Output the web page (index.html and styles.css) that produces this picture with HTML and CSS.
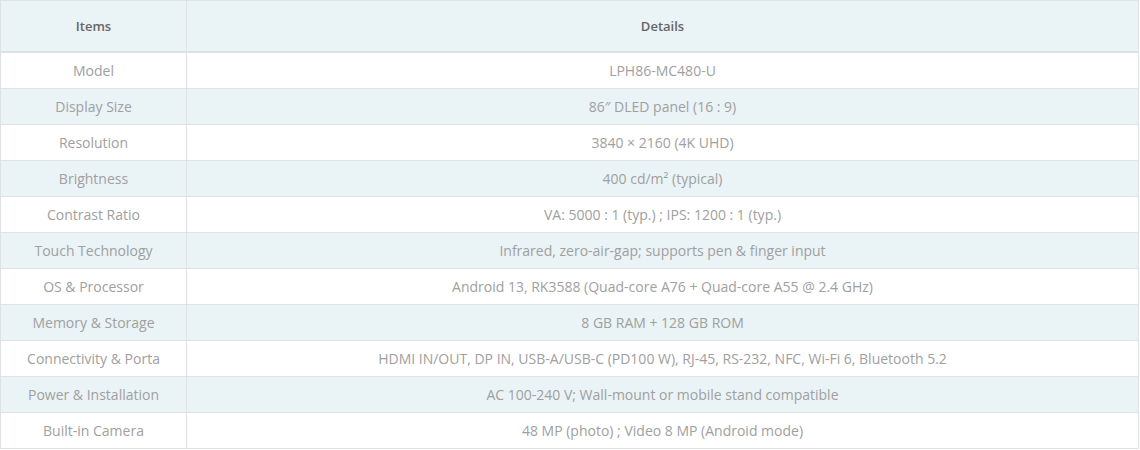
FILE: index.html
```html
<!DOCTYPE html>
<html>
<head>
<meta charset="utf-8">
<link rel="stylesheet" href="styles.css">
</head>
<body>
<table class="spec">
  <thead>
    <tr><th class="col-item">Items</th><th>Details</th></tr>
  </thead>
  <tbody>
    <tr><td>Model</td><td>LPH86-MC480-U</td></tr>
    <tr><td>Display Size</td><td>86″ DLED panel (16 : 9)</td></tr>
    <tr><td>Resolution</td><td>3840 × 2160 (4K UHD)</td></tr>
    <tr><td>Brightness</td><td>400 cd/m² (typical)</td></tr>
    <tr><td>Contrast Ratio</td><td>VA: 5000 : 1 (typ.) ; IPS: 1200 : 1 (typ.)</td></tr>
    <tr><td>Touch Technology</td><td>Infrared, zero-air-gap; supports pen &amp; finger input</td></tr>
    <tr><td>OS &amp; Processor</td><td>Android 13, RK3588 (Quad-core A76 + Quad-core A55 @ 2.4 GHz)</td></tr>
    <tr><td>Memory &amp; Storage</td><td>8 GB RAM + 128 GB ROM</td></tr>
    <tr><td>Connectivity &amp; Porta</td><td>HDMI IN/OUT, DP IN, USB-A/USB-C (PD100 W), RJ-45, RS-232, NFC, Wi-Fi 6, Bluetooth 5.2</td></tr>
    <tr><td>Power &amp; Installation</td><td>AC 100-240 V; Wall-mount or mobile stand compatible</td></tr>
    <tr><td>Built-in Camera</td><td>48 MP (photo) ; Video 8 MP (Android mode)</td></tr>
  </tbody>
</table>
</body>
</html>
```
FILE: styles.css
```css
html, body {
  margin: 0;
  padding: 0;
  background: #ffffff;
}
.spec {
  width: 1139px;
  border-collapse: collapse;
  font-family: "Open Sans", "Liberation Sans", sans-serif;
  font-size: 14px;
  color: #a0a0a0;
  text-align: center;
}
.spec th, .spec td {
  border: 1px solid #dde3e5;
  padding: 0 10px;
  text-align: center;
}
.spec th {
  height: 50px;
  background: #eaf3f6;
  color: #666666;
  font-size: 13px;
  font-weight: 600;
  border-bottom: 2px solid #dde3e5;
}
.spec .col-item {
  width: 165px;
}
.spec td {
  height: 35px;
}
.spec tbody tr:nth-child(even) td {
  background: #eaf3f6;
}
```
